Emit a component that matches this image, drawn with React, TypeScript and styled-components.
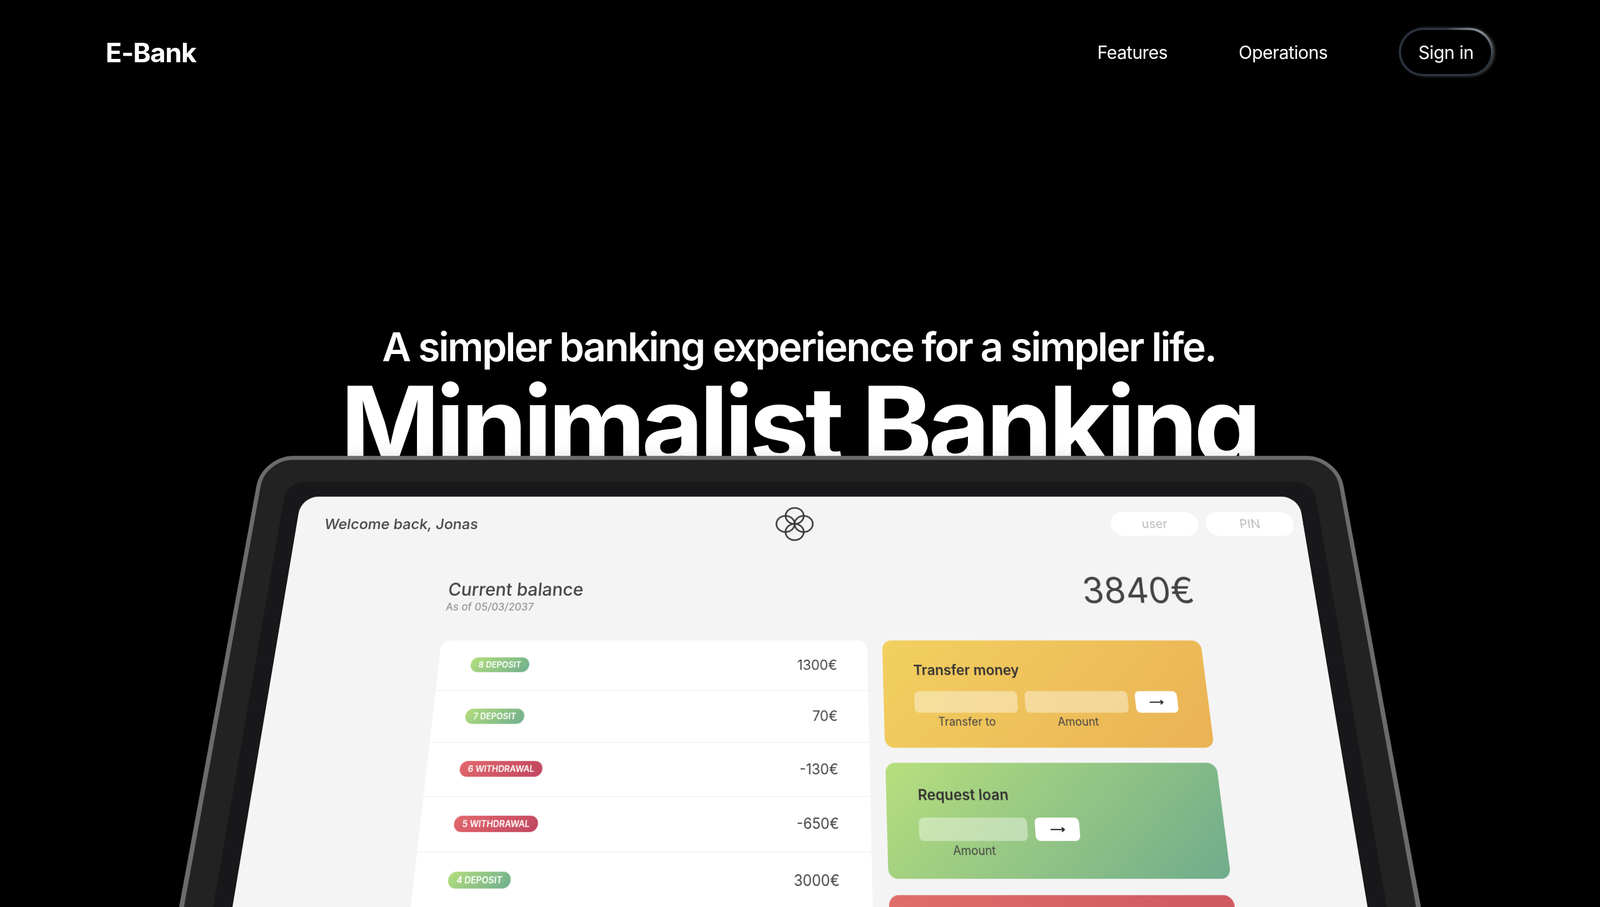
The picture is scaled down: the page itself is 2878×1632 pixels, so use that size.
import React from "react";
import styled, {createGlobalStyle} from "styled-components";

const GlobalStyle = createGlobalStyle`
  html, body {
    margin: 0;
    padding: 0;
    background: #000;
    font-family: Inter, "Liberation Sans", sans-serif;
  }
  * {
    box-sizing: border-box;
  }
`;

const movements = [
    {id: 8, type: "deposit", amount: "1300€"},
    {id: 7, type: "deposit", amount: "70€"},
    {id: 6, type: "withdrawal", amount: "-130€"},
    {id: 5, type: "withdrawal", amount: "-650€"},
    {id: 4, type: "deposit", amount: "3000€"},
];

const Logo = () => (
    <LogoSvg viewBox="0 0 66 66" preserveAspectRatio="none" fill="none" stroke="#3a3a3a" strokeWidth="2.8">
        <circle cx="33" cy="17.5" r="15.5"/>
        <circle cx="33" cy="48.5" r="15.5"/>
        <circle cx="17.5" cy="33" r="15.5"/>
        <circle cx="48.5" cy="33" r="15.5"/>
    </LogoSvg>
);

const Arrow = () => (
    <svg width="26" height="12" viewBox="0 0 26 12" fill="none" stroke="#222" strokeWidth="2.2">
        <path d="M1 6h23M20 2.5l4 3.5-4 3.5"/>
    </svg>
);

const App = () => {
    return (
        <Page>
            <GlobalStyle/>
            <Stage>
                <Nav>
                    <Brand>E-Bank</Brand>
                    <NavLinks>
                        <NavLink>Features</NavLink>
                        <NavLink>Operations</NavLink>
                        <SignIn>Sign in</SignIn>
                    </NavLinks>
                </Nav>
                <Hero>
                    <Tagline>A simpler banking experience for a simpler life.</Tagline>
                    <Title>Minimalist Banking</Title>
                </Hero>
                <Device>
                    <Bezel>
                        <Screen>
                            <AppBar>
                                <Welcome>Welcome back, Jonas</Welcome>
                                <Logo/>
                                <Login>
                                    <LoginInput placeholder="user"/>
                                    <LoginInput placeholder="PIN"/>
                                    <LoginArrow>→</LoginArrow>
                                </Login>
                            </AppBar>
                            <Main>
                                <Balance>
                                    <div>
                                        <BalanceLabel>Current balance</BalanceLabel>
                                        <BalanceDate>As of 05/03/2037</BalanceDate>
                                    </div>
                                    <BalanceValue>3840€</BalanceValue>
                                </Balance>
                                <Columns>
                                    <MovementList>
                                        {movements.map(m => (
                                            <MovementRow key={m.id}>
                                                <Badge $type={m.type}>{m.id} {m.type}</Badge>
                                                <Amount>{m.amount}</Amount>
                                            </MovementRow>
                                        ))}
                                    </MovementList>
                                    <Operations>
                                        <OperationCard $kind="transfer">
                                            <OperationTitle>Transfer money</OperationTitle>
                                            <OperationForm>
                                                <Field>
                                                    <FieldInput/>
                                                    <FieldLabel>Transfer to</FieldLabel>
                                                </Field>
                                                <Field>
                                                    <FieldInput/>
                                                    <FieldLabel>Amount</FieldLabel>
                                                </Field>
                                                <SubmitButton><Arrow/></SubmitButton>
                                            </OperationForm>
                                        </OperationCard>
                                        <OperationCard $kind="loan">
                                            <OperationTitle>Request loan</OperationTitle>
                                            <OperationForm>
                                                <Field>
                                                    <FieldInput/>
                                                    <FieldLabel>Amount</FieldLabel>
                                                </Field>
                                                <SubmitButton><Arrow/></SubmitButton>
                                            </OperationForm>
                                        </OperationCard>
                                        <OperationCard $kind="close"/>
                                    </Operations>
                                </Columns>
                            </Main>
                        </Screen>
                    </Bezel>
                </Device>
            </Stage>
        </Page>
    );
};

const Page = styled.div`
  width: 100%;
  height: 1632px;
  overflow: hidden;
  background: #000;
  color: #fff;
`;

const Stage = styled.div`
  perspective: 2000px;
  perspective-origin: 50% 760px;
`;

const Nav = styled.header`
  display: flex;
  align-items: center;
  justify-content: space-between;
  padding: 50px 192px 0 190px;
`;

const Brand = styled.div`
  padding-top: 2px;
  font-size: 48px;
  font-weight: 700;
  letter-spacing: -1px;
`;

const NavLinks = styled.nav`
  display: flex;
  align-items: center;
  gap: 128px;
`;

const NavLink = styled.a`
  padding-top: 2px;
  font-size: 32px;
  line-height: 40px;
  letter-spacing: -.6px;
`;

const SignIn = styled.button`
  width: 170px;
  height: 87px;
  padding-top: 3px;
  border: 4px solid transparent;
  border-radius: 44px;
  color: #fff;
  font: 400 32px Inter, sans-serif;
  letter-spacing: -.4px;
  background:
    linear-gradient(#000, #000) padding-box,
    conic-gradient(from 60deg, #8a8f98 0deg, #2a323e 40deg, #2a323e 300deg, #8a8f98 360deg) border-box;
  box-shadow: 3px 0 6px -2px rgba(200, 205, 215, .55);
`;

const Hero = styled.div`
  height: 684px;
  padding: 447px 4px 0 0;
  text-align: center;
`;

const Tagline = styled.h2`
  margin: 0;
  font-size: 72px;
  line-height: 80px;
  font-weight: 600;
  letter-spacing: -2.8px;
`;

const Title = styled.h1`
  margin: 4px 0 0;
  font-size: 192px;
  line-height: 192px;
  font-weight: 700;
  letter-spacing: -7.2px;
`;

const Device = styled.div`
  width: 2048px;
  height: 1280px;
  margin: 0 auto;
  padding: 44px 48px 48px;
  border: 8px solid #6c6c6c;
  border-radius: 60px;
  background: #222;
  transform: rotateX(21deg) scale(1.06);
  box-shadow: 0 18px 40px #0000004a, 0 74px 74px #00000042, 0 168px 100px #00000026;
`;

const Bezel = styled.div`
  height: 100%;
  padding: 29px 32px 32px;
  border-radius: 32px;
  background: #18181b;
`;

const Screen = styled.div`
  height: 100%;
  overflow: hidden;
  border-radius: 32px;
  background: #f4f4f4;
  color: #444;
`;

const AppBar = styled.div`
  display: flex;
  align-items: center;
  height: 106px;
  padding-left: 52px;
`;

const Welcome = styled.p`
  width: 838px;
  margin: 0;
  flex: none;
  font-size: 27.2px;
  font-weight: 500;
`;

const LogoSvg = styled.svg`
  flex: none;
  width: 72px;
  height: 66px;
`;

const Login = styled.form`
  display: flex;
  flex: none;
  align-items: center;
  gap: 14px;
  margin-left: 552px;
`;

const LoginInput = styled.input`
  width: 163px;
  height: 46px;
  border: 0;
  border-radius: 23px;
  background: #fff;
  text-align: center;
  font: 400 23px Inter, sans-serif;
  &::placeholder {
    color: #bbb;
    opacity: 1;
  }
`;

const LoginArrow = styled.span`
  font-size: 28px;
  color: #444;
`;

const Main = styled.main`
  width: 1361px;
  margin-left: 294px;
`;

const Balance = styled.section`
  display: flex;
  align-items: flex-start;
  justify-content: space-between;
  height: 163px;
  padding: 51px 2px 0 2px;
`;

const BalanceLabel = styled.p`
  margin: 0;
  font-size: 32px;
  line-height: 40px;
  font-weight: 500;
`;

const BalanceDate = styled.p`
  margin: 0 0 0 -1px;
  font-size: 19px;
  line-height: 23px;
  color: #888;
`;

const BalanceValue = styled.p`
  margin: 0;
  font-size: 64px;
  line-height: 42px;
  font-weight: 400;
`;

const Columns = styled.div`
  display: grid;
  grid-template-columns: 762px 570px;
  gap: 27px;
`;

const MovementList = styled.section`
  height: 700px;
  overflow: hidden;
  border-radius: 16px;
  background: #fff;
`;

const MovementRow = styled.div`
  display: flex;
  align-items: center;
  justify-content: space-between;
  height: 88.5px;
  padding: 0 54px 0 57px;
  border-bottom: 2px solid #f4f4f4;
`;

const Badge = styled.span<{ $type: string }>`
  padding: 4px 14px;
  border-radius: 999px;
  color: #fff;
  font-size: 14.5px;
  line-height: 18px;
  font-weight: 600;
  text-transform: uppercase;
  background: ${p => p.$type === "deposit"
    ? "linear-gradient(135deg, #b4de7c, #6fae8e)"
    : "linear-gradient(135deg, #e2686c, #c0465f)"};
`;

const Amount = styled.span`
  font-size: 24px;
  color: #444;
`;

const Operations = styled.div`
  display: flex;
  flex-direction: column;
  gap: 25px;
`;

const cardBackgrounds: Record<string, string> = {
    transfer: "linear-gradient(135deg, #f2d060, #eab254)",
    loan: "linear-gradient(135deg, #b7df7d, #70ac8c)",
    close: "linear-gradient(135deg, #e06e6a, #cb535f)",
};

const OperationCard = styled.section<{ $kind: string }>`
  flex: none;
  height: 185px;
  padding: 36px 54px 0;
  border-radius: 16px;
  background: ${p => cardBackgrounds[p.$kind]};
`;

const OperationTitle = styled.h3`
  margin: 0 0 21px;
  font-size: 24.6px;
  line-height: 32px;
  font-weight: 600;
  color: #333;
`;

const OperationForm = styled.form`
  display: flex;
  align-items: flex-start;
  gap: 13px;
`;

const Field = styled.div`
  display: flex;
  flex-direction: column;
  width: 183px;
`;

const FieldInput = styled.input`
  height: 37px;
  border: 0;
  border-radius: 8px;
  background: rgba(255, 255, 255, .4);
`;

const FieldLabel = styled.label`
  margin-top: 4px;
  text-align: center;
  font-size: 19.5px;
  line-height: 22px;
  color: #444;
`;

const SubmitButton = styled.button`
  display: flex;
  align-items: center;
  justify-content: center;
  width: 75px;
  height: 37px;
  border: 0;
  border-radius: 8px;
  background: #fff;
`;

export default App;
